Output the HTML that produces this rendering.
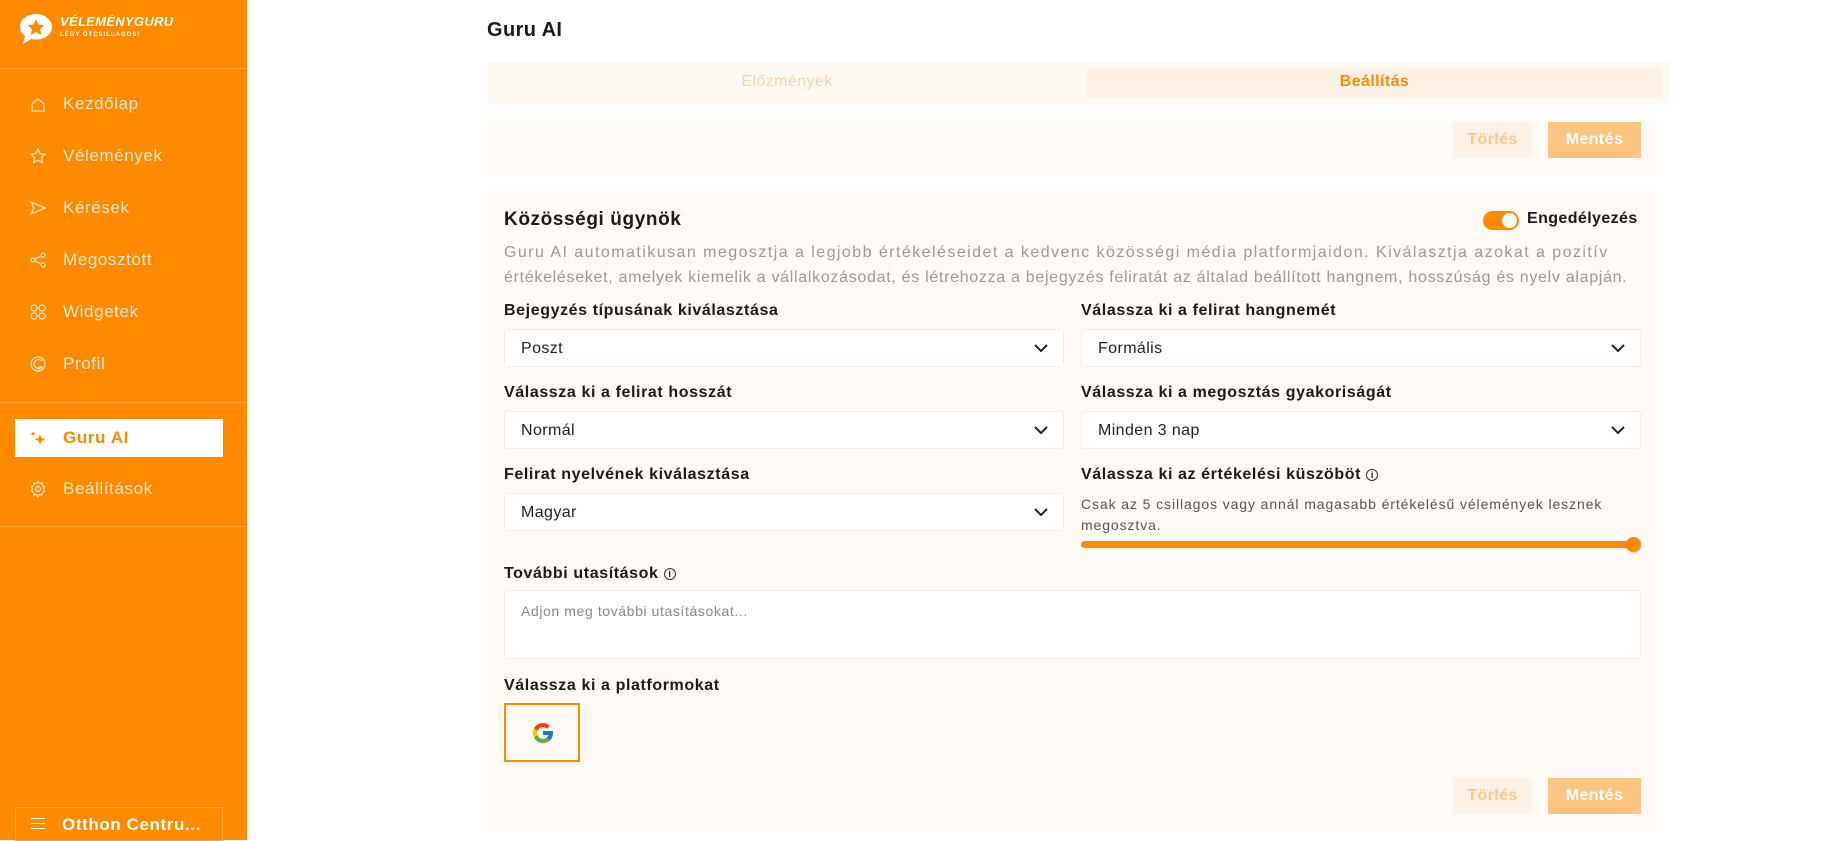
<!DOCTYPE html>
<html><head><meta charset="utf-8"><style>
*{box-sizing:border-box;margin:0;padding:0}
body{width:1825px;height:840px;overflow:hidden;background:#fff;font-family:"Liberation Sans",sans-serif;color:#1a1a1a;position:relative;letter-spacing:.4px}
.sb{position:absolute;left:0;top:0;width:247px;height:840px;background:#FF8A00}
.hr{position:absolute;left:0;width:247px;height:1px;background:#ffa640}
.nav{position:absolute;left:63px;color:#ffe9d2;font-size:17px;line-height:20px;letter-spacing:.6px}
.ic{position:absolute;left:29px;width:18px;height:18px}
.act{position:absolute;left:15px;top:419px;width:208px;height:38px;background:#fff}
.abs{position:absolute}
.lbl{position:absolute;font-size:16px;font-weight:bold;color:#1a1a1a;letter-spacing:.6px}
.sel{position:absolute;height:38px;background:#fff;border:1px solid #f3ede6;border-radius:3px;font-size:16px;padding:10px 16px;color:#222}
.sel svg{position:absolute;right:14px;top:13px}
.btn{position:absolute;height:36px;font-size:16px;font-weight:bold;text-align:center;line-height:36px}
.dl{white-space:nowrap;display:block}
</style></head><body>
<div class="sb">
 <svg class="abs" style="left:18px;top:12px" width="36" height="34" viewBox="0 0 36 34"><path d="M18 2C8 2 2 8 2 15c0 4 2 7 5 9l-2 8 8-5c2 .5 3 .5 5 .5 10 0 16-6 16-12.5S28 2 18 2z" fill="#fff"/><path d="M18 7l2.5 5.5 6 .6-4.5 4 1.3 6-5.3-3.2-5.3 3.2 1.3-6-4.5-4 6-.6z" fill="#FF8A00"/></svg>
 <div class="abs" style="left:60px;top:14px;color:#fff;font-weight:bold;font-style:italic;font-size:13px;letter-spacing:.3px">VÉLEMÉNYGURU</div>
 <div class="abs" style="left:60px;top:32px;color:#fff;font-weight:bold;font-size:6px;letter-spacing:1px">LÉGY ÖTCSILLAGOS!</div>
 <div class="hr" style="top:68px"></div>
 <svg class="ic" style="top:96px" viewBox="0 0 18 18" fill="none" stroke="#ffe2c2" stroke-width="1.3"><path d="M3 8l6-5 6 5v7H3z"/></svg><div class="nav" style="top:94px">Kezdőlap</div>
 <svg class="ic" style="top:147px" viewBox="0 0 18 18" fill="none" stroke="#ffe2c2" stroke-width="1.3"><path d="M9 2l2.2 4.6 5 .6-3.7 3.4 1 5L9 13.2 4.5 15.6l1-5L1.8 7.2l5-.6z"/></svg><div class="nav" style="top:146px">Vélemények</div>
 <svg class="ic" style="top:199px" viewBox="0 0 18 18" fill="none" stroke="#ffe2c2" stroke-width="1.3"><path d="M2 3l14 6-14 6 3-6z"/></svg><div class="nav" style="top:198px">Kérések</div>
 <svg class="ic" style="top:251px" viewBox="0 0 18 18" fill="none" stroke="#ffe2c2" stroke-width="1.3"><circle cx="4" cy="9" r="2"/><circle cx="14" cy="4" r="2"/><circle cx="14" cy="14" r="2"/><path d="M6 8l6-3M6 10l6 3"/></svg><div class="nav" style="top:250px">Megosztott</div>
 <svg class="ic" style="top:303px" viewBox="0 0 18 18" fill="none" stroke="#ffe2c2" stroke-width="1.3"><circle cx="5" cy="5" r="3"/><circle cx="13" cy="5" r="3"/><circle cx="5" cy="13" r="3"/><circle cx="13" cy="13" r="3"/></svg><div class="nav" style="top:302px">Widgetek</div>
 <svg class="ic" style="top:355px" viewBox="0 0 18 18" fill="none" stroke="#ffe2c2" stroke-width="1.3"><circle cx="9" cy="9" r="7"/><path d="M13 6a4.5 4.5 0 1 0 0 6H9"/></svg><div class="nav" style="top:354px">Profil</div>
 <div class="hr" style="top:402px"></div>
 <div class="act"></div>
 <svg class="ic" style="top:429px" viewBox="0 0 18 18" fill="#FF8A00"><path d="M11 5l1.5 4 4 1.5-4 1.5-1.5 4-1.5-4-4-1.5 4-1.5z"/><path d="M4 2l.8 2 2 .8-2 .8L4 7.6l-.8-2-2-.8 2-.8z"/></svg><div class="nav" style="top:428px;color:#FF8A00;font-weight:bold">Guru AI</div>
 <svg class="ic" style="top:480px" viewBox="0 0 18 18" fill="none" stroke="#ffe2c2" stroke-width="1.3"><circle cx="9" cy="9" r="2.5"/><path d="M9 1.5l1.5 2 2.5-.5.5 2.5 2 1.5-1 2 1 2-2 1.5-.5 2.5-2.5-.5-1.5 2-1.5-2-2.5.5-.5-2.5-2-1.5 1-2-1-2 2-1.5.5-2.5 2.5.5z"/></svg><div class="nav" style="top:479px">Beállítások</div>
 <div class="hr" style="top:526px"></div>
 <div class="abs" style="left:15px;top:807px;width:208px;height:34px;border:1px solid #ffa640"></div>
 <div class="abs" style="left:31px;top:818px;width:14px;height:11px;border-top:1.5px solid #fff;border-bottom:1.5px solid #fff"><div style="margin-top:3.5px;height:1.5px;background:#fff"></div></div>
 <div class="nav" style="top:815px;left:62px;color:#fff;font-weight:bold">Otthon Centru...</div>
</div>

<div class="abs" style="left:487px;top:19px;font-size:20px;font-weight:bold;color:#1a1a1a">Guru AI</div>
<div class="abs" style="left:487px;top:62px;width:1183px;height:42px;background:#FFF9F3"></div>
<div class="abs" style="left:1087px;top:68px;width:575px;height:30px;background:#FFF1E4"></div>
<div class="abs" style="left:487px;top:73px;width:600px;text-align:center;font-size:16px;color:#FFD2A6">Előzmények</div>
<div class="abs" style="left:1087px;top:73px;width:575px;text-align:center;font-size:16px;color:#FF8A00;font-weight:bold">Beállítás</div>

<div class="abs" style="left:487px;top:120px;width:1169px;height:55px;background:#FFFAF5"></div>
<div class="btn" style="left:1453px;top:122px;width:79px;background:#FFF1E6;color:#FFC48A">Törlés</div>
<div class="btn" style="left:1548px;top:122px;width:93px;background:#FFC382;color:#fff">Mentés</div>

<div class="abs" style="left:487px;top:191px;width:1169px;height:640px;background:#FFFAF5"></div>
<div class="abs" style="left:504px;top:209px;font-size:19px;font-weight:bold;letter-spacing:.6px">Közösségi ügynök</div>
<div class="abs" style="left:1483px;top:211px;width:36px;height:19px;border-radius:10px;background:#FF8A00"><div style="position:absolute;right:2px;top:2px;width:15px;height:15px;border-radius:50%;background:#fff"></div></div>
<div class="abs" style="left:1527px;top:210px;font-size:16px;font-weight:bold">Engedélyezés</div>
<div class="abs" style="left:504px;top:240px;font-size:16px;line-height:25px;color:#9a9a9a">
<span class="dl" style="letter-spacing:1.45px">Guru AI automatikusan megosztja a legjobb értékeléseidet a kedvenc közösségi média platformjaidon. Kiválasztja azokat a pozitív</span>
<span class="dl" style="letter-spacing:.7px">értékeléseket, amelyek kiemelik a vállalkozásodat, és létrehozza a bejegyzés feliratát az általad beállított hangnem, hosszúság és nyelv alapján.</span></div>

<div class="lbl" style="left:504px;top:302px">Bejegyzés típusának kiválasztása</div>
<div class="lbl" style="left:1081px;top:302px">Válassza ki a felirat hangnemét</div>
<div class="sel" style="left:504px;top:329px;width:560px">Poszt<svg width="16" height="10" viewBox="0 0 16 10"><path d="M2 2l6 6 6-6" fill="none" stroke="#222" stroke-width="2"/></svg></div>
<div class="sel" style="left:1081px;top:329px;width:560px">Formális<svg width="16" height="10" viewBox="0 0 16 10"><path d="M2 2l6 6 6-6" fill="none" stroke="#222" stroke-width="2"/></svg></div>

<div class="lbl" style="left:504px;top:384px">Válassza ki a felirat hosszát</div>
<div class="lbl" style="left:1081px;top:384px">Válassza ki a megosztás gyakoriságát</div>
<div class="sel" style="left:504px;top:411px;width:560px">Normál<svg width="16" height="10" viewBox="0 0 16 10"><path d="M2 2l6 6 6-6" fill="none" stroke="#222" stroke-width="2"/></svg></div>
<div class="sel" style="left:1081px;top:411px;width:560px">Minden 3 nap<svg width="16" height="10" viewBox="0 0 16 10"><path d="M2 2l6 6 6-6" fill="none" stroke="#222" stroke-width="2"/></svg></div>

<div class="lbl" style="left:504px;top:466px">Felirat nyelvének kiválasztása</div>
<div class="lbl" style="left:1081px;top:466px">Válassza ki az értékelési küszöböt <span style="display:inline-block;width:12px;height:12px;border:1.3px solid #333;border-radius:50%;font-size:9px;text-align:center;line-height:10px;vertical-align:1px;letter-spacing:0">i</span></div>
<div class="sel" style="left:504px;top:493px;width:560px">Magyar<svg width="16" height="10" viewBox="0 0 16 10"><path d="M2 2l6 6 6-6" fill="none" stroke="#222" stroke-width="2"/></svg></div>
<div class="abs" style="left:1081px;top:494px;width:560px;font-size:14px;line-height:21px;color:#555;letter-spacing:.9px">Csak az 5 csillagos vagy annál magasabb értékelésű vélemények lesznek<br>megosztva.</div>
<div class="abs" style="left:1081px;top:541px;width:552px;height:7px;border-radius:4px;background:#FF8A00"></div>
<div class="abs" style="left:1626px;top:537px;width:15px;height:15px;border-radius:50%;background:#FF8A00;box-shadow:0 1px 2px rgba(0,0,0,.2)"></div>

<div class="lbl" style="left:504px;top:565px">További utasítások <span style="display:inline-block;width:12px;height:12px;border:1.3px solid #333;border-radius:50%;font-size:9px;text-align:center;line-height:10px;vertical-align:1px;letter-spacing:0">i</span></div>
<div class="abs" style="left:504px;top:590px;width:1137px;height:69px;background:#fff;border:1px solid #f3ede6;border-radius:3px;padding:12px 16px;font-size:14px;color:#888;letter-spacing:.6px">Adjon meg további utasításokat...</div>

<div class="lbl" style="left:504px;top:677px">Válassza ki a platformokat</div>
<div class="abs" style="left:504px;top:703px;width:76px;height:59px;border:2px solid #FF8A00;background:#FFFAF5"></div>
<svg class="abs" style="left:531px;top:721px" width="24" height="24" viewBox="0 0 48 48"><path fill="#FFC107" d="M43.6 20.1H42V20H24v8h11.3C33.7 32.7 29.2 36 24 36c-6.6 0-12-5.4-12-12s5.4-12 12-12c3.1 0 5.8 1.2 7.9 3.1l5.7-5.7C34 6.1 29.3 4 24 4 13 4 4 13 4 24s9 20 20 20 20-9 20-20c0-1.3-.1-2.6-.4-3.9z"/><path fill="#FF3D00" d="M6.3 14.7l6.6 4.8C14.7 15.1 19 12 24 12c3.1 0 5.8 1.2 7.9 3.1l5.7-5.7C34 6.1 29.3 4 24 4 16.3 4 9.7 8.3 6.3 14.7z"/><path fill="#4CAF50" d="M24 44c5.2 0 9.9-2 13.4-5.2l-6.2-5.2C29.2 35.1 26.7 36 24 36c-5.2 0-9.6-3.3-11.3-7.9l-6.5 5C9.5 39.6 16.2 44 24 44z"/><path fill="#1976D2" d="M43.6 20.1H42V20H24v8h11.3c-.8 2.2-2.2 4.2-4.1 5.6l6.2 5.2C37 39.2 44 34 44 24c0-1.3-.1-2.6-.4-3.9z"/></svg>

<div class="btn" style="left:1453px;top:778px;width:79px;background:#FFF1E6;color:#FFC48A">Törlés</div>
<div class="btn" style="left:1548px;top:778px;width:93px;background:#FFC382;color:#fff">Mentés</div>
</body></html>
